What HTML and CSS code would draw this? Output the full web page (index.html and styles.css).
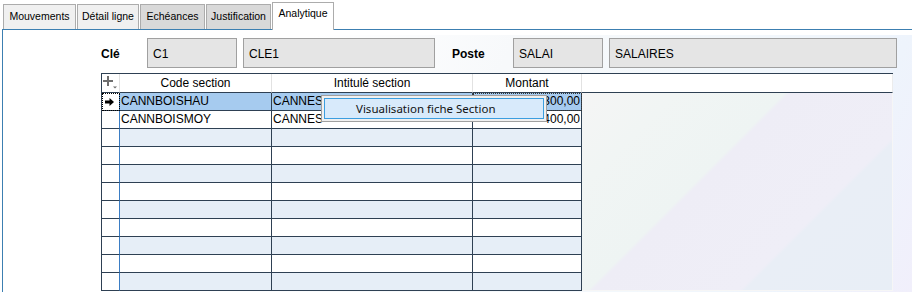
FILE: index.html
```html
<!DOCTYPE html>
<html lang="fr">
<head>
  <meta charset="UTF-8">
  <title>Analytique</title>
  <link rel="stylesheet" href="styles.css">
</head>
<body>
  <ul class="tabs">
    <li class="tab t-mvt">Mouvements</li>
    <li class="tab t-det">Détail ligne</li>
    <li class="tab dim t-ech">Echéances</li>
    <li class="tab dim t-jus">Justification</li>
    <li class="tab active t-ana">Analytique</li>
  </ul>

  <div class="panel">
    <div class="panel-body">
      <div class="fields">
        <span class="label lbl-cle">Clé</span>
        <span class="box short">C1</span>
        <span class="box mid">CLE1</span>
        <span class="label lbl-poste">Poste</span>
        <span class="box short">SALAI</span>
        <span class="box long">SALAIRES</span>
      </div>

      <div class="grid-wrap">
        <table class="grid">
          <thead>
            <tr>
              <th class="ind">
                <svg width="14" height="13" viewBox="0 0 14 13">
                  <path d="M5 0v10M0 5h10" stroke="#6e6e6e" stroke-width="2" fill="none"/>
                  <path d="M10 10.5h4l-2 2z" fill="#6e6e6e"/>
                </svg>
              </th>
              <th class="c-code">Code section</th>
              <th class="c-int">Intitulé section</th>
              <th class="c-mnt">Montant</th>
              <th class="filler"></th>
            </tr>
          </thead>
          <tbody id="rows"></tbody>
        </table>

        <div class="menu">
          <div class="menu-item">Visualisation fiche Section</div>
        </div>
      </div>
    </div>
  </div>

  <script>
    // the context menu hides the rest of the label and the amounts
    const rows = [
      { code: 'CANNBOISHAU', label: 'CANNES', amount: '300,00' },
      { code: 'CANNBOISMOY', label: 'CANNES', amount: '400,00' }
    ];
    const total = 11;
    const body = document.getElementById('rows');
    const arrow = '<svg width="9" height="8" viewBox="0 0 9 8"><path d="M0 2.6h4.5V0L9 4 4.5 8V5.4H0z" fill="#000"/></svg>';

    for (let i = 0; i < total; i++) {
      const item = rows[i] || { code: '', label: '', amount: '' };
      const tr = document.createElement('tr');
      if (i === 0) tr.className = 'selected';
      else if (i % 2 === 0) tr.className = 'alt';
      tr.innerHTML = `
        <td class="ind">${i === 0 ? arrow : ''}</td>
        <td>${item.code}</td>
        <td>${item.label}</td>
        <td class="num">${item.amount}</td>
        ${i === 0 ? `<td class="filler" rowspan="${total}"></td>` : ''}
      `;
      body.appendChild(tr);
    }
  </script>
</body>
</html>
```

FILE: styles.css
```css
body {
  margin: 0;
  background: #fff;
  font-family: "Liberation Sans", Arial, sans-serif;
  color: #000;
}

.tabs {
  display: flex;
  align-items: flex-end;
  list-style: none;
  margin: 0;
  padding: 0 0 0 3px;
  height: 29px;
}

.tab {
  box-sizing: border-box;
  height: 25px;
  padding-top: 5px;
  text-align: center;
  font-size: 10.5px;
  background: #f0f0f0;
  border: 1px solid #acacac;
  border-bottom: none;
}

.tab.dim {
  background: #d9d9d9;
}

.tab.active {
  position: relative;
  height: 28px;
  margin-bottom: -1px;
  padding-top: 4px;
  background: #fff;
}

.t-mvt { width: 73px; }
.t-det { width: 62px; margin-left: 1px; }
.t-ech { width: 65px; margin-left: 1px; }
.t-jus { width: 65px; margin-left: 1px; }
.t-ana { width: 62px; margin-left: 1px; }

.panel {
  margin-left: 2px;
  height: 263px;
  border-top: 1px solid #3c7fb1;
  border-left: 1px solid #3c7fb1;
}

.panel-body {
  margin-top: 5px;
  height: 258px;
  background: linear-gradient(115deg, #fff 0%, #fff 30%, #f7f9fb 50%, #f3f8fc 72%, #eef4fc 88%, #f1effb 100%);
}

.fields {
  display: flex;
  align-items: flex-start;
  padding: 3px 0 0 98px;
  font-size: 12px;
}

.label {
  font-weight: bold;
  padding-top: 9px;
}

.lbl-cle { width: 46px; }
.lbl-poste { width: 61px; margin-left: 11px; }

.box {
  box-sizing: border-box;
  height: 30px;
  padding: 8px 0 0 5px;
  margin-right: 6px;
  background: #e5e5e5;
  border: 1px solid #a0a0a0;
}

.box.short { width: 90px; }
.box.mid { width: 192px; }
.box.long { width: 288px; }

.grid-wrap {
  position: relative;
  margin: 5px 0 0 98px;
  width: 792px;
}

.grid {
  border-collapse: separate;
  border-spacing: 0;
  table-layout: fixed;
  width: 792px;
  font-size: 12px;
  border-top: 1px solid #2e4053;
  border-left: 1px solid #2e4053;
}

.grid th,
.grid td {
  box-sizing: border-box;
  padding: 0 1px 1px;
  white-space: nowrap;
  overflow: hidden;
}

.grid th {
  height: 17px;
  font-weight: normal;
  background: #fff;
  border-right: 1px solid #e2e2e2;
  border-bottom: 1px solid #2e4053;
}

.grid th.ind { width: 18px; text-align: left; padding: 2px 0 0 1px; }
.grid th.c-code { width: 152px; }
.grid th.c-int { width: 201px; }
.grid th.c-mnt { width: 109px; }
.grid th.filler { width: 311px; border-right: 1px solid #ececec; }

.grid td {
  height: 18px;
  background: #fff;
  border-right: 1px solid #2e4053;
  border-bottom: 1px solid #2e4053;
}

.grid tr.alt td {
  background: #e6eef7;
}

.grid tr.selected td {
  background: #a6cbef;
}

.grid td.ind,
.grid tr.alt td.ind,
.grid tr.selected td.ind {
  background: #fff;
  border-right: 1px solid #3b7dc4;
  padding: 1px 0 0 3px;
}

.grid tr.selected td.ind {
  outline: 1px dotted #000;
  outline-offset: -1px;
}

.grid tr.selected td.num {
  outline: 1px dotted #333;
  outline-offset: -1px;
}

.grid td.num {
  text-align: right;
}

.grid td.filler,
.grid tr.selected td.filler {
  background: linear-gradient(135deg, #f5f5f5 0%, #f1f5f4 18%, #eef4f3 40%, #eeedf6 41%, #efeef7 70%, #e9eef6 71%, #e8eef6 100%);
  border-right: 1px solid #f6f6f6;
  border-bottom: 1px solid #f6f6f6;
}

.menu {
  position: absolute;
  left: 220px;
  top: 22px;
  box-sizing: border-box;
  width: 226px;
  height: 27px;
  padding: 2px;
  background: #f0f0f0;
  border: 1px solid #a0a0a0;
}

.menu-item {
  box-sizing: border-box;
  height: 21px;
  padding: 2px 0 0 31px;
  font-family: "Noto Sans", sans-serif;
  font-size: 11.5px;
  color: #111;
  background: #d8eafb;
  border: 1px solid #3b9ee0;
}
```
